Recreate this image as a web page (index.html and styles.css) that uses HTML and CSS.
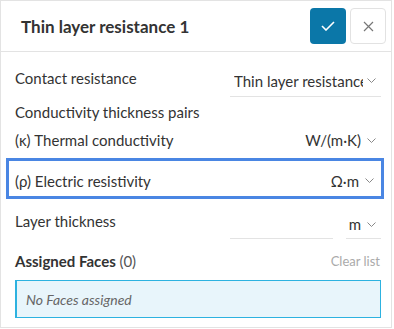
FILE: index.html
```html
<!DOCTYPE html>
<html lang="en">
<head>
  <meta charset="UTF-8" />
  <title>Thin layer resistance 1</title>
  <link rel="stylesheet" href="styles.css">
</head>
<body>
  <div class="panel">
    <div class="panel-header">
      <span class="panel-title">Thin layer resistance 1</span>
      <button class="btn-ok">
        <svg width="14" height="10" viewBox="0 0 14 10"><path d="M1 5 L5 9 L13 1" fill="none" stroke="#fff" stroke-width="1.6"/></svg>
      </button>
      <button class="btn-close">
        <svg width="11" height="11" viewBox="0 0 11 11"><path d="M1 1 L10 10 M10 1 L1 10" fill="none" stroke="#777" stroke-width="1.2"/></svg>
      </button>
    </div>

    <div class="panel-body">
      <div class="row row-contact">
        <span class="label">Contact resistance</span>
        <div class="select select-wide">
          <span class="select-value">Thin layer resistance</span>
          <svg class="chev" width="9" height="5" viewBox="0 0 9 5"><path d="M0.5 0.5 L4.5 4.5 L8.5 0.5" fill="none" stroke="#888" stroke-width="1"/></svg>
        </div>
      </div>

      <div class="subtitle">Conductivity thickness pairs</div>

      <div class="row row-plain">
        <span class="label">(κ) Thermal conductivity</span>
        <div class="unit">
          <span>W/(m·K)</span>
          <svg class="chev" width="9" height="5" viewBox="0 0 9 5"><path d="M0.5 0.5 L4.5 4.5 L8.5 0.5" fill="none" stroke="#888" stroke-width="1"/></svg>
        </div>
      </div>

      <div class="row row-plain row-highlight">
        <span class="label">(ρ) Electric resistivity</span>
        <div class="unit">
          <span>Ω·m</span>
          <svg class="chev" width="9" height="5" viewBox="0 0 9 5"><path d="M0.5 0.5 L4.5 4.5 L8.5 0.5" fill="none" stroke="#888" stroke-width="1"/></svg>
        </div>
      </div>

      <div class="row row-thickness">
        <span class="label">Layer thickness</span>
        <div class="input-line"></div>
        <div class="select select-unit">
          <span class="unit-value">m</span>
          <svg class="chev" width="9" height="5" viewBox="0 0 9 5"><path d="M0.5 0.5 L4.5 4.5 L8.5 0.5" fill="none" stroke="#888" stroke-width="1"/></svg>
        </div>
      </div>

      <div class="faces-head">
        <span class="faces-title">Assigned Faces <span class="count">(0)</span></span>
        <span class="clear">Clear list</span>
      </div>
      <div class="faces-box">No Faces assigned</div>
    </div>
  </div>
</body>
</html>
```

FILE: styles.css
```css
* {
  box-sizing: border-box;
}
body {
  margin: 0;
  font-family: Lato, "Open Sans", sans-serif;
  color: #333;
  background: #fff;
}
.panel {
  width: 392px;
  height: 328px;
  border: 1px solid #e3e3e3;
  display: flex;
  flex-direction: column;
}
.panel-header {
  height: 51px;
  border-bottom: 1px solid #e3e3e3;
  display: flex;
  align-items: center;
  padding: 0 5px 0 20px;
}
.panel-title {
  flex: 1;
  font-size: 17px;
  font-weight: bold;
  color: #333;
}
.btn-ok,
.btn-close {
  width: 36px;
  height: 36px;
  border-radius: 4px;
  padding: 0;
  display: flex;
  align-items: center;
  justify-content: center;
  cursor: pointer;
}
.btn-ok {
  background: #0b77a8;
  border: none;
  margin-right: 4px;
}
.btn-close {
  background: #fff;
  border: 1px solid #e2e2e2;
}
.panel-body {
  padding: 0 10px 0 14px;
  display: flex;
  flex-direction: column;
}
.label {
  font-size: 15px;
  color: #333;
}
.row {
  display: flex;
  align-items: center;
}
.row-contact {
  height: 44px;
  margin-top: 1px;
}
.row-contact .label {
  flex: 1;
  padding-top: 6px;
}
.row-thickness .label {
  flex: 1;
  padding-top: 3px;
}
.select {
  display: flex;
  align-items: center;
  border-bottom: 1px solid #e3e3e3;
  height: 32px;
  margin-top: 12px;
  font-size: 15px;
}
.select-wide {
  width: 151px;
  padding: 0 5px 0 4px;
}
.select-value {
  flex: 1;
  white-space: nowrap;
  overflow: hidden;
}
.chev {
  flex: none;
  margin-left: 6px;
}
.select-wide .chev {
  margin-left: 4px;
}
.subtitle {
  font-size: 15px;
  margin-top: 4px;
  height: 22px;
  line-height: 22px;
}
.row-plain {
  height: 34px;
  justify-content: space-between;
}
.row-plain .label {
  flex: 1;
}
.unit {
  display: flex;
  align-items: center;
  font-size: 15px;
  padding-right: 5px;
}
.row-highlight {
  height: 41px;
  margin: 1px -3px 0 -9px;
  padding: 4px 2px 0 6px;
  border: 3px solid #4a86e3;
}
.row-thickness {
  height: 40px;
}
.row-thickness .select {
  height: 28px;
  margin-top: 11px;
}
.input-line {
  width: 103px;
  height: 28px;
  margin-top: 11px;
  border-bottom: 1px solid #e3e3e3;
  margin-right: 13px;
}
.select-unit {
  width: 35px;
  padding: 0 5px 0 4px;
  justify-content: flex-end;
}
.unit-value {
  flex: none;
}
.faces-head {
  display: flex;
  justify-content: space-between;
  align-items: center;
  height: 41px;
  padding-top: 2px;
}
.faces-title {
  font-size: 15px;
  font-weight: bold;
  color: #333;
}
.count {
  font-weight: normal;
  color: #555;
}
.clear {
  font-size: 13px;
  color: #aaa;
  margin-right: 1px;
}
.faces-box {
  height: 38px;
  background: #e8f5fb;
  border: 1px solid #2db2e0;
  border-left-width: 2px;
  padding-left: 9px;
  display: flex;
  align-items: center;
  font-size: 14px;
  font-style: italic;
  color: #666;
}
```
